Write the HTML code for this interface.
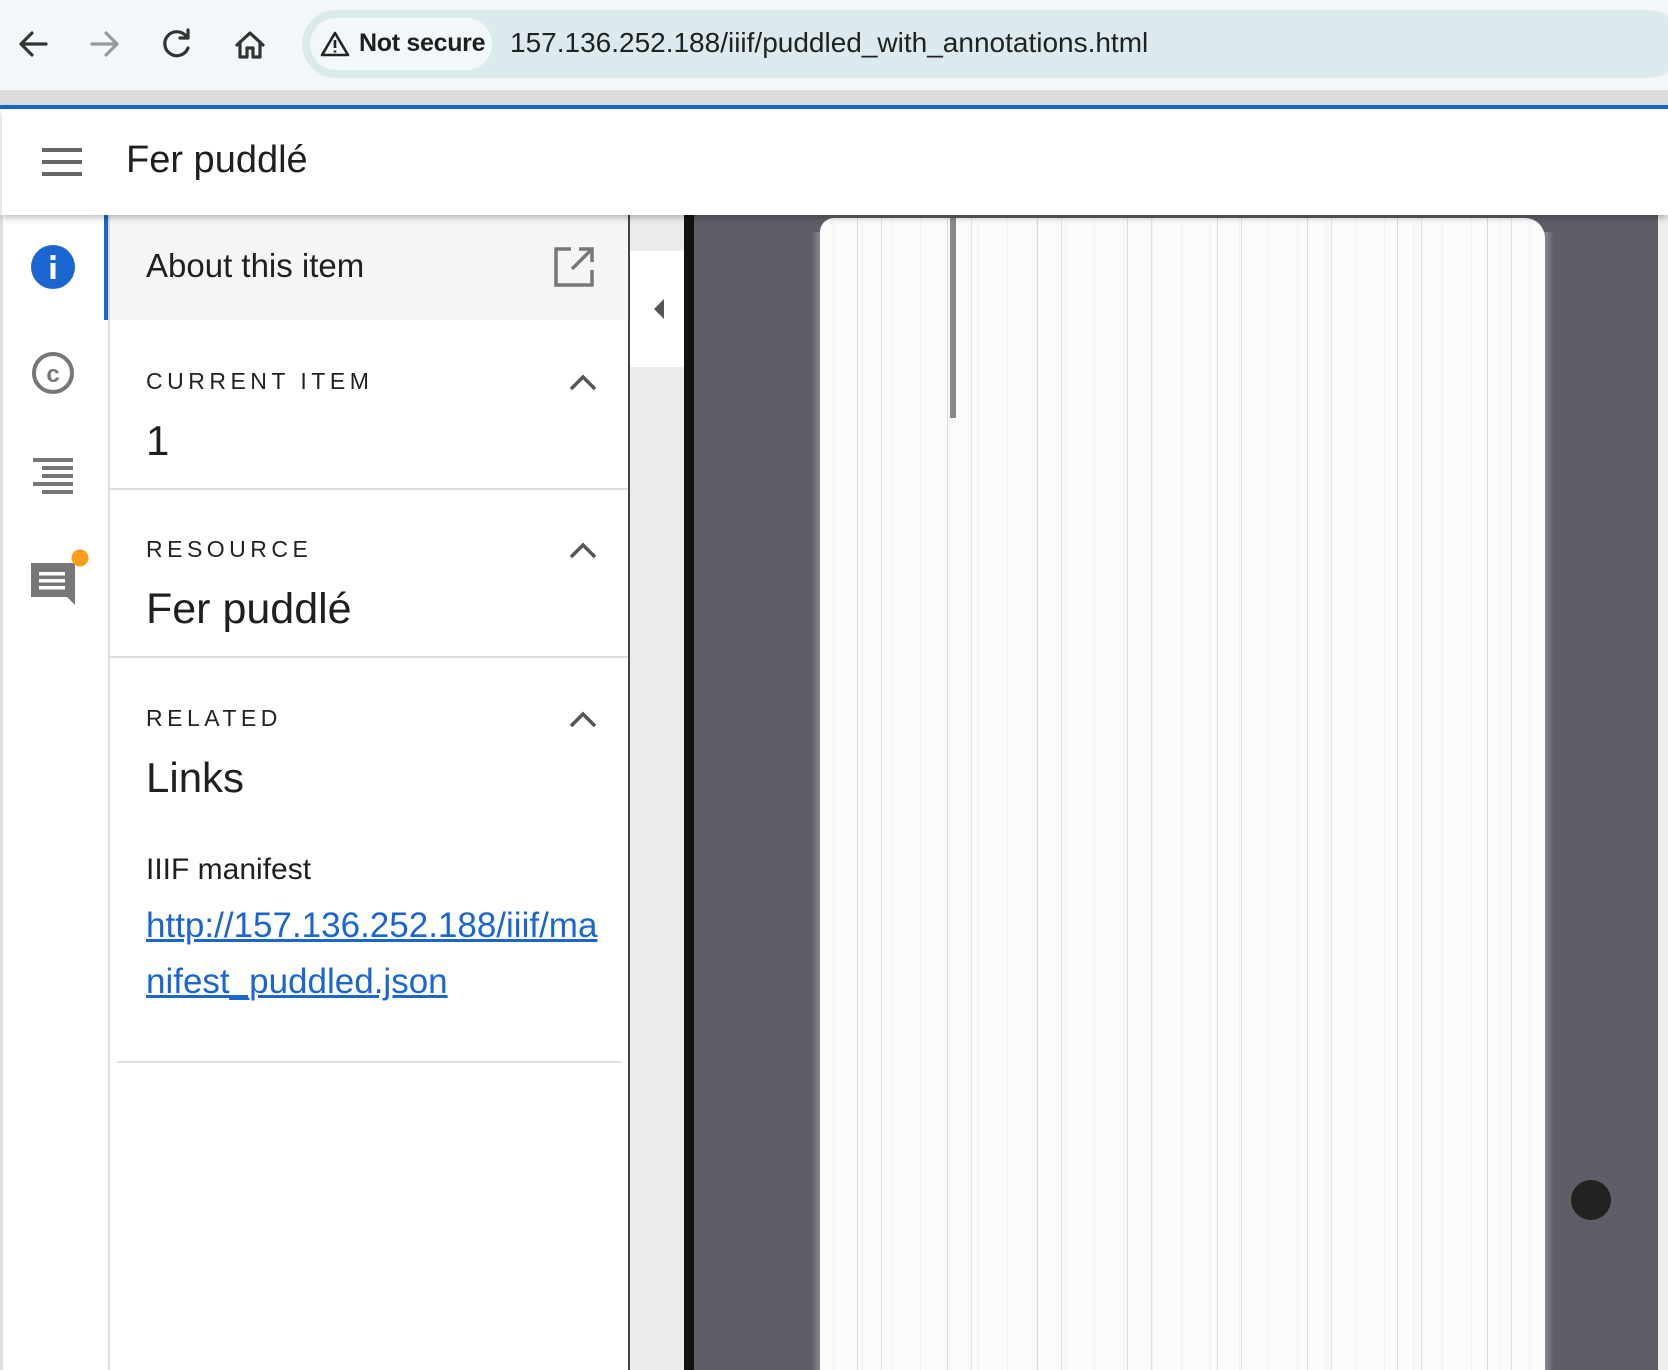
<!DOCTYPE html>
<html><head><meta charset="utf-8"><style>
*{margin:0;padding:0;box-sizing:border-box}
body{width:1668px;height:1370px;overflow:hidden;background:#fff;font-family:"Liberation Sans",sans-serif;position:relative}
.abs{position:absolute}
.lbl{font-size:23px;letter-spacing:4.5px;color:#222}
.big{font-size:42px;color:#1f1f1f}
.chev{position:absolute;left:568px;width:30px;height:20px}
</style></head><body>
<!-- browser bar -->
<div class="abs" style="left:0;top:0;width:1668px;height:92px;background:#f2f8fa"></div>
<div class="abs" style="left:0;top:90px;width:1668px;height:15px;background:#dcdcdc"></div>
<div class="abs" style="left:0;top:105px;width:1668px;height:4px;background:#1a65d0"></div>
<svg class="abs" style="left:0;top:0" width="280" height="90" viewBox="0 0 280 90">
<g fill="none" stroke-width="3.2" stroke-linecap="round" stroke-linejoin="round">
<path d="M46 44H22M32 33L21 44 32 55" stroke="#333"/>
<path d="M92 44h24M106 33l11 11-11 11" stroke="#999"/>
<path d="M186 36a12 12 0 1 0 2 12M188 30v8h-8" stroke="#333"/>
<path d="M237 45l13-12 13 12M240 42v15h7v-9h6v9h7V42" stroke="#333"/>
</g></svg>
<div class="abs" style="left:302px;top:10px;width:1380px;height:68px;border-radius:34px;background:#dceaee"></div>
<div class="abs" style="left:310px;top:18px;width:182px;height:52px;border-radius:26px;background:#f2f8fa"></div>
<svg class="abs" style="left:320px;top:30px" width="30" height="28" viewBox="0 0 30 28"><path d="M15 3L28 25H2Z" fill="none" stroke="#222" stroke-width="2.6" stroke-linejoin="round"/><path d="M15 10v8M15 20.5v2" stroke="#222" stroke-width="2.6"/></svg>
<div class="abs" style="left:359px;top:29px;font-size:25px;color:#1f1f1f;font-weight:bold;letter-spacing:-0.3px">Not secure</div>
<div class="abs" style="left:510px;top:27px;font-size:28px;color:#202124">157.136.252.188/iiif/puddled_with_annotations.html</div>
<!-- header -->
<div class="abs" style="left:2px;top:109px;width:1666px;height:106px;background:#fff;box-shadow:0 3px 6px rgba(0,0,0,.25);z-index:2"></div>
<svg class="abs" style="left:42px;top:147px;z-index:3" width="42" height="30"><rect y="1" width="40" height="4" fill="#666"/><rect y="13" width="40" height="4" fill="#666"/><rect y="25" width="40" height="4" fill="#666"/></svg>
<div class="abs" style="left:126px;top:139px;font-size:38px;color:#1f1f1f;z-index:3">Fer puddlé</div>
<!-- rail -->
<div class="abs" style="left:0;top:215px;width:3px;height:1155px;background:#ddd"></div>
<div class="abs" style="left:108px;top:215px;width:2px;height:1155px;background:#ddd"></div>
<div class="abs" style="left:104px;top:215px;width:4px;height:105px;background:#1a65d0"></div>
<svg class="abs" style="left:30px;top:244px" width="46" height="46"><circle cx="23" cy="23" r="22" fill="#1a65d0"/><rect x="20.5" y="11" width="5" height="5" fill="#fff"/><rect x="20.5" y="19" width="5" height="16" fill="#fff"/></svg>
<svg class="abs" style="left:31px;top:351px" width="46" height="46"><circle cx="22" cy="22" r="19" fill="none" stroke="#777" stroke-width="4"/><text x="22" y="31" font-size="24" font-family="Liberation Sans" font-weight="bold" fill="#777" text-anchor="middle">c</text></svg>
<svg class="abs" style="left:33px;top:456px" width="42" height="44" fill="#777"><rect x="0" y="2" width="40" height="4"/><rect x="9" y="10" width="31" height="4"/><rect x="9" y="18" width="31" height="4"/><rect x="0" y="26" width="40" height="4"/><rect x="9" y="34" width="31" height="4"/></svg>
<svg class="abs" style="left:30px;top:548px" width="60" height="62"><path d="M1 15h44v42l-8-8H1z" fill="#777"/><rect x="9" y="24" width="26" height="3.5" fill="#fff"/><rect x="9" y="31" width="26" height="3.5" fill="#fff"/><rect x="9" y="38" width="26" height="3.5" fill="#fff"/><circle cx="50" cy="10" r="8.5" fill="#f99d1c"/></svg>
<!-- panel -->
<div class="abs" style="left:110px;top:215px;width:518px;height:105px;background:#f5f5f5"></div>
<div class="abs" style="left:146px;top:247px;font-size:33px;color:#1f1f1f">About this item</div>
<svg class="abs" style="left:553px;top:246px" width="42" height="42" fill="none" stroke="#777" stroke-width="3.5"><path d="M18 3H3v36h36V24"/><path d="M26 3h13v13M39 3L19 23"/></svg>
<div class="abs lbl" style="left:146px;top:368px">CURRENT ITEM</div>
<div class="abs big" style="left:146px;top:417px">1</div>
<div class="abs" style="left:110px;top:488px;width:518px;height:2px;background:#ddd"></div>
<div class="abs lbl" style="left:146px;top:536px">RESOURCE</div>
<div class="abs big" style="left:146px;top:585px;font-size:43px">Fer puddlé</div>
<div class="abs" style="left:110px;top:656px;width:518px;height:2px;background:#ddd"></div>
<div class="abs lbl" style="left:146px;top:705px">RELATED</div>
<div class="abs big" style="left:146px;top:754px">Links</div>
<div class="abs" style="left:146px;top:853px;font-size:30px;color:#1f1f1f">IIIF manifest</div>
<div class="abs" style="left:146px;top:898px;font-size:35px;color:#1a65d0;text-decoration:underline;line-height:56px;width:462px;word-break:break-all">http://157.136.252.188/iiif/manifest_puddled.json</div>
<div class="abs" style="left:117px;top:1061px;width:504px;height:2px;background:#ddd"></div>
<svg class="chev" style="top:372px" viewBox="0 0 30 20"><path d="M3 17L15 5l12 12" fill="none" stroke="#555" stroke-width="3.5"/></svg>
<svg class="chev" style="top:540px" viewBox="0 0 30 20"><path d="M3 17L15 5l12 12" fill="none" stroke="#555" stroke-width="3.5"/></svg>
<svg class="chev" style="top:709px" viewBox="0 0 30 20"><path d="M3 17L15 5l12 12" fill="none" stroke="#555" stroke-width="3.5"/></svg>
<!-- collapse strip -->
<div class="abs" style="left:628px;top:215px;width:58px;height:1155px;background:#ececec;border-left:2px solid #444"></div>
<div class="abs" style="left:630px;top:251px;width:61px;height:116px;background:#fff"></div>
<svg class="abs" style="left:652px;top:297px" width="14" height="24"><path d="M12 2L2 12l10 10z" fill="#555"/></svg>
<div class="abs" style="left:684px;top:215px;width:11px;height:1155px;background:#111"></div>
<!-- image -->
<div class="abs" style="left:694px;top:215px;width:964px;height:1155px;background:#5d5e66"></div>
<div class="abs" style="left:812px;top:232px;width:16px;height:1138px;background:linear-gradient(90deg,#5d5e66,#b5b8c0)"></div>
<div class="abs" style="left:1536px;top:232px;width:18px;height:1138px;background:linear-gradient(90deg,#b0b4bc,#5d5e66)"></div>
<div class="abs" style="left:820px;top:218px;width:725px;height:1152px;background:#fbfbfc;border-radius:14px 20px 0 0;
background-image:repeating-linear-gradient(90deg,transparent 0 37px,rgba(70,70,90,.18) 37px 38px,transparent 38px 61px,rgba(60,60,80,.12) 61px 62px,transparent 62px 90px),repeating-linear-gradient(90deg,transparent 0 13px,rgba(100,100,120,.06) 13px 14px,transparent 14px 29px)"></div>
<div class="abs" style="left:950px;top:218px;width:6px;height:200px;background:#888"></div>
<div class="abs" style="left:1571px;top:1180px;width:40px;height:40px;border-radius:50%;background:#222"></div>
<div class="abs" style="left:1658px;top:215px;width:10px;height:1155px;background:#eee"></div>
</body></html>
